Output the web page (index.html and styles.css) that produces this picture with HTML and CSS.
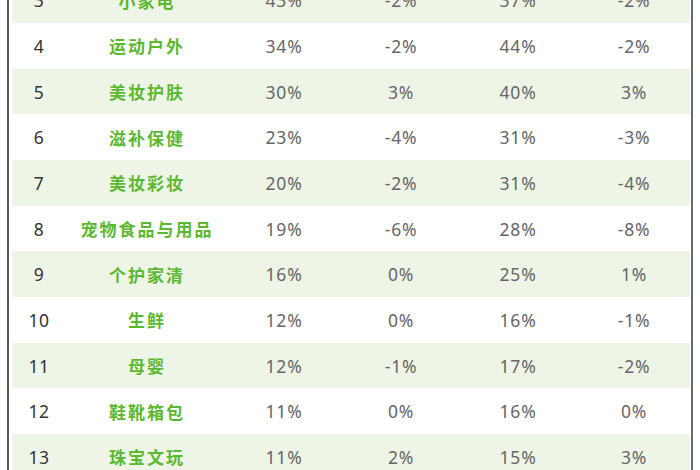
FILE: index.html
```html
<!DOCTYPE html>
<html lang="zh">
<head>
<meta charset="utf-8">
<title>table</title>
<link rel="stylesheet" href="styles.css">
</head>
<body>
<div class="frame">
  <div class="table">
    <div class="row alt"><span class="c-rank">3</span><span class="c-cat">小家电</span><span>43%</span><span>-2%</span><span>37%</span><span>-2%</span></div>
    <div class="row"><span class="c-rank">4</span><span class="c-cat">运动户外</span><span>34%</span><span>-2%</span><span>44%</span><span>-2%</span></div>
    <div class="row alt"><span class="c-rank">5</span><span class="c-cat">美妆护肤</span><span>30%</span><span>3%</span><span>40%</span><span>3%</span></div>
    <div class="row"><span class="c-rank">6</span><span class="c-cat">滋补保健</span><span>23%</span><span>-4%</span><span>31%</span><span>-3%</span></div>
    <div class="row alt"><span class="c-rank">7</span><span class="c-cat">美妆彩妆</span><span>20%</span><span>-2%</span><span>31%</span><span>-4%</span></div>
    <div class="row"><span class="c-rank">8</span><span class="c-cat">宠物食品与用品</span><span>19%</span><span>-6%</span><span>28%</span><span>-8%</span></div>
    <div class="row alt"><span class="c-rank">9</span><span class="c-cat">个护家清</span><span>16%</span><span>0%</span><span>25%</span><span>1%</span></div>
    <div class="row"><span class="c-rank">10</span><span class="c-cat">生鲜</span><span>12%</span><span>0%</span><span>16%</span><span>-1%</span></div>
    <div class="row alt"><span class="c-rank">11</span><span class="c-cat">母婴</span><span>12%</span><span>-1%</span><span>17%</span><span>-2%</span></div>
    <div class="row"><span class="c-rank">12</span><span class="c-cat">鞋靴箱包</span><span>11%</span><span>0%</span><span>16%</span><span>0%</span></div>
    <div class="row alt"><span class="c-rank">13</span><span class="c-cat">珠宝文玩</span><span>11%</span><span>2%</span><span>15%</span><span>3%</span></div>
  </div>
</div>
</body>
</html>
```
FILE: styles.css
```css
html, body {
  margin: 0;
  padding: 0;
  background: #ffffff;
  overflow: hidden;
}
body {
  font-family: "Noto Sans", "Noto Sans CJK SC", sans-serif;
}
.frame {
  margin-left: 7px;
  margin-top: -22.5px;
  width: 678px;
  border-left: 2px solid #5a5a5a;
  border-right: 2px solid #6a6a6a;
  padding: 0 1px 0 3px;
}
.table {
  display: flex;
  flex-direction: column;
}
.row {
  display: grid;
  grid-template-columns: 54px 162px 112px 122px 112px 115px;
  height: 45.67px;
  align-items: center;
  background: #ffffff;
  font-size: 17.5px;
  color: #666666;
  letter-spacing: 0.8px;
}
.row.alt {
  background: #eef5e7;
}
.row span {
  text-align: center;
}
.row span:last-child {
  padding-left: 5px;
}
.row .c-rank {
  color: #333333;
  letter-spacing: 0.5px;
}
.row .c-cat {
  color: #5cb82e;
  font-weight: bold;
  font-size: 17px;
  letter-spacing: 2px;
}
```
